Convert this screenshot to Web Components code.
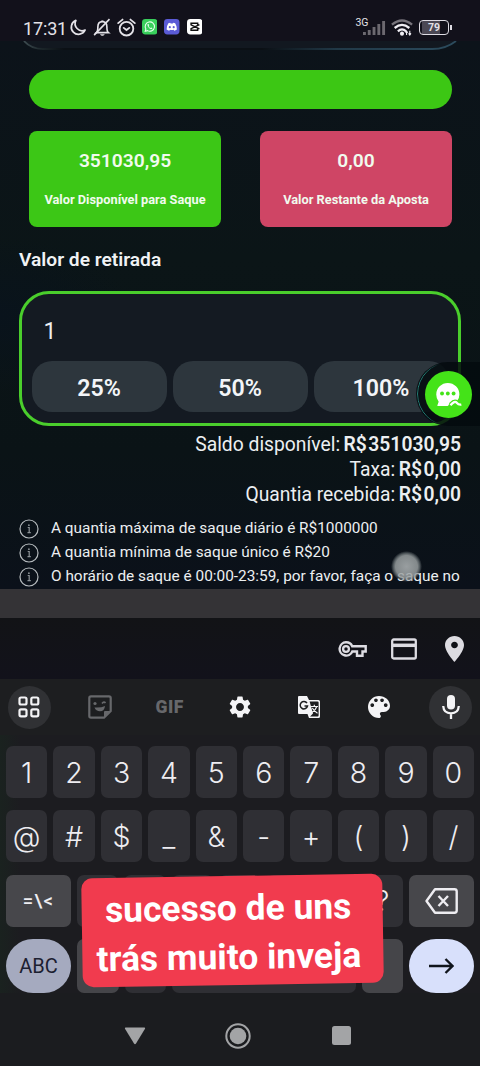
<!DOCTYPE html>
<html lang="pt-BR">
<head>
<meta charset="utf-8">
<title>Retirada</title>
<style>
html,body{margin:0;padding:0;background:#1b1c1f}
body{width:480px;height:1066px;overflow:hidden;font-family:Roboto,"Liberation Sans",sans-serif;color:#eceff1}
</style>
</head>
<body>
<phone-screen></phone-screen>
<script>
const define=(name,html)=>customElements.define(name,class extends HTMLElement{
  constructor(){super();this.attachShadow({mode:'open'}).innerHTML=typeof html==='function'?html(this):html;}
});

const ICONS={
  moon:['0 0 24 24','<path d="M9.2 3.2A9.6 9.6 0 1 0 21.5 16 A9.4 9.4 0 0 1 9.2 3.2Z" fill="none" stroke="currentColor" stroke-width="2.3" stroke-linejoin="round"/>'],
  mute:['0 0 24 24','<g fill="none" stroke="currentColor" stroke-width="2.2"><path d="M4.5 18.5H20.500C18.500 17 18.500 15.500 18.500 11C18.500 7.500 16.500 4.500 12.500 4.500S6.500 7.500 6.500 11C6.500 15 6.500 17 4.500 18.500Z"/><path d="M22 1.500L1.500 21.500"/></g><path d="M9.500 20.500H15.500C15 23 10 23 9.500 20.500ZM11 3h3v2h-3z" fill="currentColor"/>'],
  alarm:['0 0 24 24','<g fill="none" stroke="currentColor" stroke-width="2.3"><circle cx="12" cy="13.500" r="8.600"/><path d="M8.500 12.500L12 15.200L15.500 12.500M1.500 6.500L7 2M22.500 6.500L17 2" stroke-linecap="round"/></g>'],
  whats:['0 0 16 16','<rect width="16" height="16" rx="3.500" fill="#39cf5c"/><path d="M3.300 12.700L4 10.300A4.800 4.800 0 1 1 5.800 12Z" fill="none" stroke="#eafff0" stroke-width="1.100"/><path d="M6 5.200C5 6 6.300 8.300 7.300 9.200S10.300 11 10.800 9.600L9.500 8.800L8.700 9.400C8 9 7 8 6.900 7.300L7.300 6.500L6.800 5.200Z" fill="#eafff0"/>'],
  discord:['0 0 16 16','<rect width="16" height="16" rx="3.500" fill="#5b5bd6"/><path d="M4.500 4.500Q6 3.800 6.500 4L7 4.600H9L9.500 4Q10.300 3.800 11.500 4.500Q13.500 7.500 13.300 10.800Q12 12 10.500 12L10 11.200Q8 11.700 6 11.200L5.500 12Q4 12 2.700 10.800Q2.500 7.500 4.500 4.500Z" fill="#fff"/><circle cx="6" cy="8.400" r="1.100" fill="#5b5bd6"/><circle cx="10" cy="8.400" r="1.100" fill="#5b5bd6"/>'],
  capcut:['0 0 16 16','<rect width="16" height="16" rx="3.500" fill="#fff"/><path d="M11 6V4.400H4.200V6L12.800 10.200M11 10V11.600H4.200V10L12.800 5.800" fill="none" stroke="#111" stroke-width="1.500"/>'],
  signal:['0 0 24 15','<g fill="#6c6970"><rect x="0" y="12" width="3" height="3"/><rect x="5" y="10" width="3" height="5"/><rect x="10" y="7" width="3" height="8"/><rect x="15" y="4" width="3" height="11"/><rect x="20" y="1" width="3" height="14"/></g>'],
  wifi:['0 0 24 18','<g fill="none" stroke="#f0eef4" stroke-width="2.500"><path d="M1 6Q12-3 23 6" stroke="#77747c"/><path d="M4 9.500Q12 3 20 9.500"/><path d="M7.500 13Q12 9 16.500 13"/></g><circle cx="12" cy="15.500" r="2.200" fill="#f0eef4"/><path d="M17 17V13.500M20.500 12.500V16.500M15.800 14.500L17 13L18.300 14.500M19.200 15.300L20.500 17L21.800 15.300" fill="none" stroke="#f0eef4" stroke-width="1.200"/>'],
  info:['0 0 20 20','<circle cx="10" cy="10" r="9" fill="none" stroke="#b5babd" stroke-width="1.200"/><path d="M8.700 8.500H10.200V13.700M8.500 13.700H11.800" fill="none" stroke="#8d9397" stroke-width="1.200"/><circle cx="9.900" cy="6.200" r=".9" fill="#8d9397"/>'],
  key:['0 0 29 16','<path d="M8 1.300A6.600 6.600 0 1 0 14.300 10.500H19V14.700H24.500V10.500H27.700V5.200H14.200A6.600 6.600 0 0 0 8 1.300Z" fill="none" stroke="currentColor" stroke-width="2.400"/><circle cx="8" cy="8" r="2.900" fill="none" stroke="currentColor" stroke-width="2.300"/>'],
  card:['0 0 26 22','<rect x="1.200" y="1.500" width="23.600" height="19" rx="1.500" fill="none" stroke="currentColor" stroke-width="2.300"/><path d="M1 7.300H25" stroke="currentColor" stroke-width="3.500"/>'],
  pin:['5 2 14 20','<path d="M12 2C8.130 2 5 5.130 5 9c0 5.250 7 13 7 13s7-7.750 7-13c0-3.870-3.130-7-7-7zm0 9.500c-1.380 0-2.500-1.120-2.500-2.500s1.120-2.500 2.500-2.500 2.500 1.120 2.500 2.500-1.120 2.500-2.500 2.500z" fill="currentColor"/>'],
  grid:['0 0 22 22','<g fill="none" stroke="currentColor" stroke-width="2.200"><rect x="1.500" y="1.500" width="7" height="7" rx="1.500"/><rect x="13.300" y="1.500" width="7" height="7" rx="1.500"/><rect x="1.500" y="13.300" width="7" height="7" rx="1.500"/><rect x="13.300" y="13.300" width="7" height="7" rx="1.500"/></g>'],
  sticker:['0 0 24 24','<path d="M3 1.300H21Q22.700 1.300 22.700 3V16L16 22.700H3Q1.300 22.700 1.300 21V3Q1.300 1.300 3 1.300Z" fill="none" stroke="currentColor" stroke-width="2.2"/><path d="M22 16H17Q16 16 16 17V22ZM6.500 12.500Q13 13 17 11Q16.500 16.300 12 16.300Q8 16.300 6.500 12.500Z" fill="currentColor"/><circle cx="7" cy="8.500" r="1.600" fill="currentColor"/><path d="M14 8.500Q16 6 17.500 8" fill="none" stroke="currentColor" stroke-width="1.600"/>'],
  gear:['2 2 20 20','<path d="M19.140 12.940c.04-.3.060-.61.060-.94 0-.32-.02-.64-.07-.94l2.030-1.580c.18-.14.230-.41.120-.61l-1.920-3.320c-.12-.22-.37-.29-.59-.22l-2.390.96c-.5-.38-1.030-.7-1.620-.94l-.36-2.540c-.04-.24-.24-.41-.48-.41h-3.840c-.24 0-.43.170-.47.410l-.36 2.540c-.59.240-1.130.570-1.620.94l-2.390-.96c-.22-.08-.47 0-.59.220L2.740 8.870c-.12.210-.08.470.120.610l2.030 1.580c-.05.300-.09.630-.09.940s.02.640.070.940l-2.030 1.580c-.18.140-.23.410-.12.610l1.920 3.320c.12.220.37.290.59.220l2.390-.96c.5.380 1.030.7 1.620.94l.36 2.540c.05.240.24.410.48.410h3.840c.24 0 .44-.17.470-.41l.36-2.540c.59-.24 1.130-.56 1.620-.94l2.390.96c.22.080.47 0 .59-.22l1.920-3.320c.12-.22.070-.47-.12-.61l-2.010-1.580zM12 15.600c-1.980 0-3.600-1.620-3.600-3.600s1.620-3.600 3.600-3.600 3.600 1.620 3.600 3.600-1.620 3.600-3.600 3.600z" fill="currentColor"/>'],
  translate:['0 0 24 24','<path d="M2 1H10L12 5H21.500Q23 5 23 6.500V21.500Q23 23 21.500 23H12L10.500 19H2Q1 19 1 18V2Q1 1 2 1Z" fill="currentColor"/><path d="M12.600 6.500H20.500Q21.600 6.500 21.600 7.600V20.500Q21.600 21.600 20.500 21.600H13L16 18.500Z" fill="#1d1e20"/><path d="M10 8.200A3.700 3.700 0 1 0 10.500 11H7.500" fill="none" stroke="#1d1e20" stroke-width="1.500"/><path d="M14 11.500H21M17.300 9.800V11.500M19.800 11.500Q18.500 15.500 14.800 17.500M15.300 13Q17 16 20.500 18.200" fill="none" stroke="currentColor" stroke-width="1.200"/>'],
  palette:['3 3 18 18','<path d="M12 3a9 9 0 0 0 0 18c.83 0 1.500-.67 1.500-1.500 0-.39-.15-.74-.39-1.010-.23-.26-.38-.61-.38-.99 0-.83.670-1.500 1.500-1.500H16c2.760 0 5-2.240 5-5 0-4.420-4.030-8-9-8zm-5.500 9c-.83 0-1.500-.67-1.500-1.500S5.670 9 6.500 9 8 9.670 8 10.500 7.330 12 6.500 12zm3-4C8.670 8 8 7.330 8 6.500S8.670 5 9.500 5s1.500.67 1.500 1.500S10.330 8 9.500 8zm5 0c-.83 0-1.500-.67-1.500-1.500S13.670 5 14.500 5s1.500.67 1.500 1.500S15.330 8 14.500 8zm3 4c-.83 0-1.500-.67-1.500-1.500S16.670 9 17.500 9s1.500.67 1.500 1.500-.67 1.500-1.500 1.500z" fill="currentColor"/>'],
  mic:['0 0 18 26','<rect x="5" y="1" width="8" height="14.500" rx="4" fill="currentColor"/><path d="M1.200 12Q1.700 19.300 9 19.300T16.800 12M9 19V25" fill="none" stroke="currentColor" stroke-width="2.300"/>'],
  back:['0 0 33 26','<path d="M10 1.300H29.500Q31.700 1.300 31.700 3.500V22.500Q31.700 24.700 29.500 24.700H10L1.500 13Z" fill="none" stroke="currentColor" stroke-width="2.400" stroke-linejoin="round"/><path d="M13.500 8L23 18M23 8L13.500 18" stroke="currentColor" stroke-width="2.400"/>'],
  arrow:['0 0 25 16','<path d="M0 8H23.500M16.500 1L23.500 8L16.500 15" fill="none" stroke="currentColor" stroke-width="2.300"/>'],
  down:['0 0 22 18','<path d="M1.500 .5H20.500Q21.500 .7 21 1.700L12 16.500Q11 18 10 16.500L1 1.700Q.5 .7 1.500 .5Z" fill="currentColor"/>'],
  home:['0 0 26 26','<circle cx="13" cy="13" r="11.700" fill="none" stroke="currentColor" stroke-width="2"/><circle cx="13" cy="13" r="8.300" fill="currentColor"/>'],
  square:['0 0 19 19','<rect width="19" height="19" rx="2.500" fill="currentColor"/>'],
  edge:['0 0 440 10','<defs><linearGradient id="g" x1="0" x2="440" y1="0" y2="0" gradientUnits="userSpaceOnUse"><stop offset="0" stop-color="#46555a"/><stop offset=".05" stop-color="#1b2529"/><stop offset=".1" stop-color="#0b1015"/><stop offset=".55" stop-color="#0b1015"/><stop offset=".72" stop-color="#213947"/><stop offset="1" stop-color="#2c4c5e"/></linearGradient></defs><path d="M3 0Q10 8 22 8H412Q426 8 436 0Z" fill="#121820"/><path d="M4 0Q11 8 23 8H412Q426 8 436 0" fill="none" stroke="url(#g)" stroke-width="1.800"/>'],
  chat:['0 0 28 26','<path d="M2.500 24.300L3.800 20.500Q1.300 17.500 1.300 13A12 12 0 0 1 25.300 13Q25.300 17 23 19.500L13 25H2.500Z" fill="#fff"/><g fill="#44e318"><circle cx="7.300" cy="12" r="2"/><circle cx="13.300" cy="12" r="2"/><circle cx="19.300" cy="12" r="2"/><path d="M13.500 26L15 21.500Q19 17 22.500 18.500L28 22V26Z"/></g><path d="M16 24.300Q20.500 19 22.500 21.500T27.300 23.500" fill="none" stroke="#fff" stroke-width="2.400"/>']
};
define('ui-icon',el=>{const [vb,p]=ICONS[el.getAttribute('name')];
  return `<style>:host{display:block;flex:none;width:${el.getAttribute('w')}px;height:${el.getAttribute('h')}px}svg{display:block;width:100%;height:100%}</style><svg viewBox="${vb}" preserveAspectRatio="none">${p}</svg>`;});

define('status-bar',`<style>
:host{display:flex;height:41px;box-sizing:border-box;padding:14px 28px 0 23px;background:#12111b;color:#e4e2e8}
.l,.r{display:flex;align-items:center;height:26px}
.time{font-size:18px;width:43px;white-space:nowrap;letter-spacing:-.15px;padding-top:2px;box-sizing:border-box}
.r{margin-left:auto}
.net{font-size:10.500px;align-self:flex-start;margin:2px -5px 0 0;line-height:13px;position:relative;left:1px}
.bat{box-sizing:border-box;width:30px;height:15px;border:1.500px solid #dedce3;border-radius:4px;background:linear-gradient(90deg,transparent 2px,#4b4854 2px,#4b4854 20px,transparent 20px);font:700 10.500px/13px Roboto,sans-serif;text-align:center}
.tip{width:2px;height:5px;background:#dedce3;margin-left:1px}
</style>
<div class="l"><span class="time">17:31</span>
<ui-icon name="moon" w="18" h="18" style="margin-left:3px"></ui-icon><ui-icon name="mute" w="18" h="19" style="margin-left:6px"></ui-icon><ui-icon name="alarm" w="19" h="19" style="margin-left:5.500px"></ui-icon><ui-icon name="whats" w="15.500" h="15.500" style="margin-left:6px"></ui-icon><ui-icon name="discord" w="15.500" h="15.500" style="margin-left:7px"></ui-icon><ui-icon name="capcut" w="15.500" h="15.500" style="margin-left:7px"></ui-icon></div>
<div class="r"><span class="net">3G</span><ui-icon name="signal" w="23" h="15"></ui-icon><ui-icon name="wifi" w="22" h="17" style="margin-left:5.500px"></ui-icon><div class="bat" style="margin-left:6px">79</div><div class="tip"></div></div>`);

define('value-card',`<style>
:host{display:flex;flex-direction:column;align-items:center;box-sizing:border-box;width:192px;height:96px;border-radius:8px;background:var(--tone);padding-top:18px;color:#f1fbee}
.v{font:600 19.200px/23px Roboto,sans-serif}.t{font:700 12.800px/16px Roboto,sans-serif;margin-top:20px;white-space:nowrap}
</style><div class="v"><slot name="value"></slot></div><div class="t"><slot></slot></div>`);

define('percent-button',`<style>:host{flex:1;display:flex;align-items:center;justify-content:center;height:51px;border-radius:20px;background:#2d363d;font:600 23.200px Roboto,sans-serif;color:#f3f5f8;padding-top:3px;box-sizing:border-box}</style><slot></slot>`);

define('amount-box',`<style>
:host{display:block;box-sizing:border-box;width:442px;height:135px;border:3px solid #4ace2c;border-radius:30px;background:#141a22;padding:0 9.500px}
.in{height:67px;box-sizing:border-box;padding:24px 0 0 12px;font-size:23px;line-height:28px}
.row{display:flex;gap:6px}
</style><div class="in"><slot></slot></div><div class="row"><percent-button>25%</percent-button><percent-button>50%</percent-button><percent-button>100%</percent-button></div>`);

define('summary-line',`<style>:host{display:flex;justify-content:flex-end;align-items:baseline;height:25.100px;font-size:19.300px;line-height:25.100px;gap:3.500px;white-space:nowrap}b{font-weight:600}.c{margin-right:-1px}</style><span><slot></slot></span><b class="c">R$</b><b style="margin-left:-1px"><slot name="value"></slot></b>`);

define('info-line',`<style>:host{display:flex;align-items:center;height:24.300px;font-size:15.380px;gap:12px;white-space:nowrap}span{position:relative;top:-1px}</style><ui-icon name="info" w="20" h="20"></ui-icon><span><slot></slot></span>`);

define('chat-bubble',`<style>
:host{display:block;position:absolute;left:416px;top:321px;width:64px;height:64px;border-radius:32px 0 0 32px;background:rgba(4,10,14,.85);overflow:hidden}
.ring{position:absolute;left:1px;top:0;width:64px;height:64px;box-sizing:border-box;border:1.500px solid #258078;border-radius:32px;-webkit-mask-image:linear-gradient(90deg,#000 8px,transparent 22px);mask-image:linear-gradient(90deg,#000 8px,transparent 22px)}
.dot{position:absolute;left:8.500px;top:8.500px;width:47px;height:47px;border-radius:50%;background:#44e318;display:flex;align-items:center;justify-content:center}
</style><div class="ring"></div><div class="dot"><ui-icon name="chat" w="27" h="25"></ui-icon></div>`);

define('withdraw-page',`<style>
:host{display:block;position:relative;height:548px;overflow:hidden;background:radial-gradient(ellipse at 0 50%,#09131c 0,rgba(9,19,28,0) 20%),linear-gradient(180deg,#0c131a,#0b1517 40%,#0a1316 75%,#0b111a)}
.bar{height:38.500px;margin:19px 28px 0 29px;border-radius:20px;background:#3cc714}
.cards{display:flex;justify-content:space-between;margin:22.500px 28px 0 29px}
h2{font:600 19.200px/24px Roboto,sans-serif;margin:21px 0 19px 19px;color:#f0f2f4}
amount-box{margin-left:19px}
.sum{margin:6px 19px 0 0}
.info{margin:9.300px 0 0 19px}
.touch{position:absolute;left:391px;top:510px;width:31px;height:31px;border-radius:50%;background:radial-gradient(circle,#b2b7b8 0,#989e9f 11px,rgba(125,133,135,.75) 13px,rgba(90,100,104,0) 15.500px);opacity:.85}
</style>
<ui-icon name="edge" w="440" h="10" style="margin-left:20px"></ui-icon><div class="bar"></div>
<div class="cards"><value-card style="--tone:#3cc716"><span slot="value">351030,95</span>Valor Disponível para Saque</value-card><value-card style="--tone:#cf4565"><span slot="value">0,00</span>Valor Restante da Aposta</value-card></div>
<h2>Valor de retirada</h2>
<amount-box>1</amount-box>
<div class="sum"><summary-line>Saldo disponível:<span slot="value">351030,95</span></summary-line><summary-line>Taxa:<span slot="value">0,00</span></summary-line><summary-line>Quantia recebida:<span slot="value">0,00</span></summary-line></div>
<div class="info"><info-line>A quantia máxima de saque diário é R$1000000</info-line><info-line>A quantia mínima de saque único é R$20</info-line><info-line>O horário de saque é 00:00-23:59, por favor, faça o saque no</info-line></div>
<chat-bubble></chat-bubble><div class="touch"></div>`);

define('autofill-bar',`<style>:host{display:flex;align-items:center;justify-content:flex-end;height:61px;box-sizing:border-box;padding-right:16px;background:linear-gradient(#121316,#12121b);color:#dddce2}</style>
<ui-icon name="key" w="29" h="16"></ui-icon><ui-icon name="card" w="26" h="22" style="margin-left:23.500px"></ui-icon><ui-icon name="pin" w="19" h="26" style="margin-left:28.500px"></ui-icon>`);

define('key-tools',`<style>
:host{display:grid;grid-template-columns:44px 1fr 1fr 1fr 1fr 1fr 44px;align-items:center;justify-items:center;height:56px;box-sizing:border-box;padding:0 7.500px 0 7px;color:#f4f4f6}
.c{width:43px;height:43px;border-radius:50%;background:#303134;display:flex;align-items:center;justify-content:center}
.gif{font:900 17.500px Roboto,sans-serif;color:#67686b;letter-spacing:.6px}
.dim{color:#67686b}
</style><div class="c"><ui-icon name="grid" w="22" h="22"></ui-icon></div><ui-icon class="dim" name="sticker" w="24" h="24" style="margin-left:23px"></ui-icon><span class="gif" style="margin-left:11px">GIF</span><ui-icon name="gear" w="22" h="22"></ui-icon><ui-icon name="translate" w="24" h="24" style="margin-right:13px"></ui-icon><ui-icon name="palette" w="22" h="22" style="margin-right:23px"></ui-icon><div class="c"><ui-icon name="mic" w="18" h="26"></ui-icon></div>`);

define('key-cap',`<style>
:host{flex:1 1 0;min-width:0;display:flex;align-items:center;justify-content:center;height:52px;border-radius:7px;background:#2f2f34;font:350 28.500px Inter,sans-serif;color:#eeedf1}
:host([fn]){flex:0 0 65px;background:#47474b}
:host([pill]){height:54px;border-radius:27px}
:host([space]){flex:0 0 183.500px}
:host([tone]){background:#454549}
</style><slot></slot>`);

define('key-board',()=>{const row=s=>'<div class="row">'+[...s].map(c=>`<key-cap>${c==='<'?'&lt;':c==='&'?'&amp;':c}</key-cap>`).join('')+'</div>';
return `<style>
:host{display:flex;flex-direction:column;gap:12.300px;padding:11px 6px 0;height:258px;box-sizing:border-box;background:linear-gradient(90deg,#1a221f 0,#1c1c20 20px)}
.row{display:flex;gap:6px}
</style>${row('1234567890')}${row('@#$_&-+()/')}
<div class="row"><key-cap fn style="font:500 18.500px Roboto,sans-serif;letter-spacing:1.300px">=\\&lt;</key-cap>${'<key-cap></key-cap>'.repeat(6)}<key-cap>?</key-cap><key-cap fn><ui-icon name="back" w="33" h="26"></ui-icon></key-cap></div>
<div class="row"><key-cap fn pill style="background:#a5aabf;color:#1c2030;font:400 20px Roboto,sans-serif">ABC</key-cap><key-cap pill tone style="border-radius:7px"></key-cap><key-cap pill style="border-radius:7px"></key-cap><key-cap space pill style="border-radius:7px"></key-cap><key-cap pill tone style="border-radius:7px"></key-cap><key-cap fn pill style="background:#d8e0fb;color:#10151c"><ui-icon name="arrow" w="25" h="16"></ui-icon></key-cap></div>`;});

define('nav-bar',`<style>:host{display:flex;align-items:center;height:73px;box-sizing:border-box;padding:12px 0 0 124px;color:#a3a4a6;background:#1b1c1f}</style>
<ui-icon name="down" w="22" h="18"></ui-icon><ui-icon name="home" w="26" h="26" style="margin-left:79px"></ui-icon><ui-icon name="square" w="19" h="19" style="margin-left:81px"></ui-icon>`);

define('caption-sticker',`<style>
:host{position:absolute;left:82px;top:875.500px;width:301px;height:109px;box-sizing:border-box;border-radius:11px;background:#f13b4e;transform:rotate(-.9deg);display:flex;flex-direction:column;align-items:center;padding-top:8px;padding-right:8px;font:700 35.400px/49px Roboto,sans-serif;color:#fff;white-space:nowrap}
</style><slot></slot>`);

define('phone-screen',`<style>
:host{display:flex;flex-direction:column;position:relative;width:480px;height:1066px;overflow:hidden}
.band{height:29px;background:#343336}
key-tools{background:#1d1e20}
</style><status-bar></status-bar><withdraw-page></withdraw-page><div class="band"></div><autofill-bar></autofill-bar><key-tools></key-tools><key-board></key-board><nav-bar></nav-bar><caption-sticker><div>sucesso de uns</div><div>trás muito inveja</div></caption-sticker>`);
</script>
</body>
</html>
